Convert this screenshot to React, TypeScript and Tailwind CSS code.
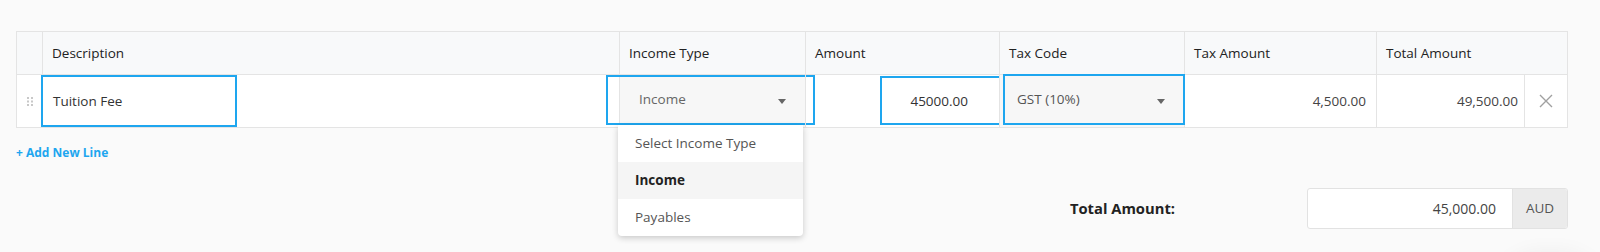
import React from "react";

const BLUE = "border-[#1ea6ef]";

function Caret() {
  return (
    <svg width="8" height="5" viewBox="0 0 8 5" className="text-[#666]">
      <path d="M0 0h8L4 5z" fill="currentColor" />
    </svg>
  );
}

function DragHandle() {
  return (
    <svg width="6" height="9" viewBox="0 0 6 9" className="text-[#c8c8c8]">
      {[0, 3.5, 7].map((y) =>
        [0, 4].map((x) => (
          <rect key={`${x}-${y}`} x={x} y={y} width="2" height="2" fill="currentColor" />
        ))
      )}
    </svg>
  );
}

export default function App() {
  const headers = [
    "",
    "Description",
    "Income Type",
    "Amount",
    "Tax Code",
    "Tax Amount",
    "Total Amount",
    "",
  ];

  return (
    <div className="relative min-h-[252px] overflow-hidden bg-[#fafafa] pl-4 pr-8 pt-[31px] font-['Open_Sans',sans-serif] text-[#333]">
      {/* line items table */}
      <div className="grid grid-cols-[25px_577px_186px_194px_185px_192px_148px_1fr] border border-[#e4e4e4] bg-white">
        {headers.map((h, i) => (
          <div
            key={i}
            className={`flex h-[43px] items-center border-b border-[#e4e4e4] bg-[#f8f9fa] pl-[9px] text-[13.5px] text-[#222] ${
              i > 0 ? "border-l" : ""
            } ${i === 7 ? "border-l-0" : ""}`}
          >
            {h}
          </div>
        ))}

        <div className="flex h-[52px] items-center justify-center">
          <DragHandle />
        </div>
        <div className="relative flex items-center border-l border-[#e4e4e4] pl-[10px] text-[13.5px] text-[#333]">
          Tuition Fee
          <div className={`absolute -left-[2px] top-0 h-[52px] w-[196px] border-2 ${BLUE}`} />
        </div>
        <div className="relative border-l border-[#e4e4e4]">
          <div className="flex h-full items-center justify-between bg-[#f7f7f7] pl-[19px] pr-[19px] text-[13.5px] text-[#666]">
            <span className="-mt-[3px]">Income</span>
            <Caret />
          </div>
          <div className={`absolute -left-[14px] top-0 h-[50px] w-[209px] border-2 ${BLUE}`} />
        </div>
        <div className="relative flex items-center justify-end border-l border-[#e4e4e4] pr-[31px] text-[13.5px] text-[#333]">
          45000.00
          <div className={`absolute left-[74px] top-[1px] h-[49px] w-[122px] border-2 ${BLUE}`} />
        </div>
        <div className="relative border-l border-[#e4e4e4]">
          <div className="flex h-full items-center justify-between bg-[#f7f7f7] pl-[17px] pr-[19px] text-[13.5px] text-[#555]">
            <span className="-mt-[3px]">GST (10%)</span>
            <Caret />
          </div>
          <div className={`absolute left-[3px] -top-px h-[51px] w-[182px] border-2 ${BLUE}`} />
        </div>
        <div className="flex items-center justify-end border-l border-[#e4e4e4] pr-[10px] text-[13.5px] text-[#444]">
          4,500.00
        </div>
        <div className="flex items-center justify-end border-l border-[#e4e4e4] pr-[6px] text-[13.5px] text-[#444]">
          49,500.00
        </div>
        <div className="flex items-center justify-center border-l border-[#e4e4e4]">
          <svg width="16" height="16" viewBox="0 0 16 16" className="text-[#a0a0a0]">
            <path d="M2 2l12 12M14 2L2 14" stroke="currentColor" strokeWidth="1.4" fill="none" />
          </svg>
        </div>
      </div>

      {/* income type dropdown */}
      <div className="absolute left-[618px] top-[125px] z-10 w-[185px] rounded-b-[4px] bg-white text-[13.5px] shadow-[0_2px_6px_rgba(0,0,0,0.2)]">
        <div className="flex h-[37px] items-center pl-[17px] text-[#555]">Select Income Type</div>
        <div className="flex h-[37px] items-center bg-[#f5f5f5] pl-[17px] font-bold text-[#222]">Income</div>
        <div className="flex h-[37px] items-center rounded-b-[4px] pl-[17px] text-[#555]">Payables</div>
      </div>

      <div className="mt-[16px] text-[12px] font-bold text-[#1ea6ef]">+ Add New Line</div>

      {/* totals */}
      <div className="mt-[26px] flex items-center justify-end">
        <span className="mr-[132px] text-[14.75px] font-bold text-[#222]">Total Amount:</span>
        <div className="flex h-[41px] w-[261px] overflow-hidden rounded-[3px] border border-[#e2e2e2] bg-white">
          <div className="flex flex-1 items-center justify-end pr-[16px] text-[14px] text-[#444]">
            45,000.00
          </div>
          <div className="flex w-[55px] items-center justify-center border-l border-[#e2e2e2] bg-[#ebebeb] text-[13.5px] text-[#555]">
            AUD
          </div>
        </div>
      </div>

      <div className="absolute left-[1500px] top-[256px] h-[80px] w-[100px] rounded-full shadow-[0_0_24px_rgba(0,0,0,0.07)]" />
    </div>
  );
}
